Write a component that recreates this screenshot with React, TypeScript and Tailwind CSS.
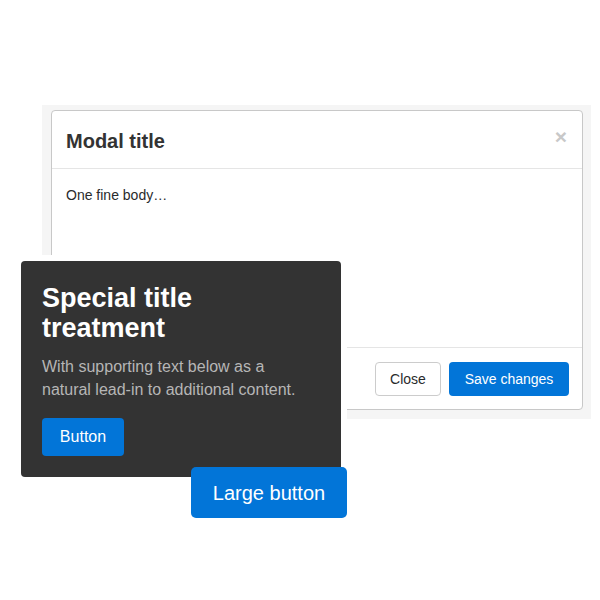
import React from 'react';

export default function App() {
  return (
    <div className="relative w-[600px] h-[600px] bg-white overflow-hidden font-['Liberation_Sans',Arial,sans-serif]">
      {/* backdrop + modal */}
      <div className="ml-[42px] mt-[105px] w-[549px] h-[314px] bg-[#f5f5f5] pl-[9px] pt-[5px]">
        <div className="w-[532px] h-[300px] bg-white border border-[#c8c8c8] rounded-[4px] flex flex-col">
          <div className="flex justify-between items-start h-[58px] pl-[14px] pr-[15px] pt-[16px] border-b border-[#e5e5e5]">
            <h4 className="text-[20px] leading-[28px] font-bold text-[#333]">Modal title</h4>
            <button className="text-[21px] leading-none font-bold text-[#c8c8c8] -mt-[1px]">×</button>
          </div>
          <div className="h-[178px] pl-[14px] pt-[16px] text-[14px] leading-[20px] text-[#292b2c]">
            One fine body…
          </div>
          <div className="flex-1 flex justify-end items-start gap-[8px] pr-[13px] pt-[14px] border-t border-[#e5e5e5]">
            <button className="h-[34px] w-[66px] rounded-[4px] border border-[#ccc] bg-white text-[14px] text-[#292b2c]">
              Close
            </button>
            <button className="h-[34px] w-[120px] rounded-[4px] bg-[#0275d8] text-[14px] text-white">
              Save changes
            </button>
          </div>
        </div>
      </div>

      {/* dark card lying over the modal */}
      <div className="absolute left-[21px] top-[261px] w-[320px] h-[216px] bg-[#333] rounded-[4px] shadow-[0_0_0_6px_#fff] pl-[21px] pt-[22px]">
        <h3 className="text-[27px] leading-[30px] font-bold text-white">
          Special title
          <br />
          treatment
        </h3>
        <p className="mt-[12px] text-[16px] leading-[23px] text-[#b6b6b6]">
          With supporting text below as a
          <br />
          natural lead-in to additional content.
        </p>
        <button className="mt-[17px] h-[38px] w-[82px] rounded-[4px] bg-[#0275d8] text-[16px] text-white">
          Button
        </button>
      </div>

      <button className="absolute left-[191px] top-[467px] w-[156px] h-[51px] rounded-[5px] bg-[#0275d8] text-[20px] text-white">
        Large button
      </button>
    </div>
  );
}
